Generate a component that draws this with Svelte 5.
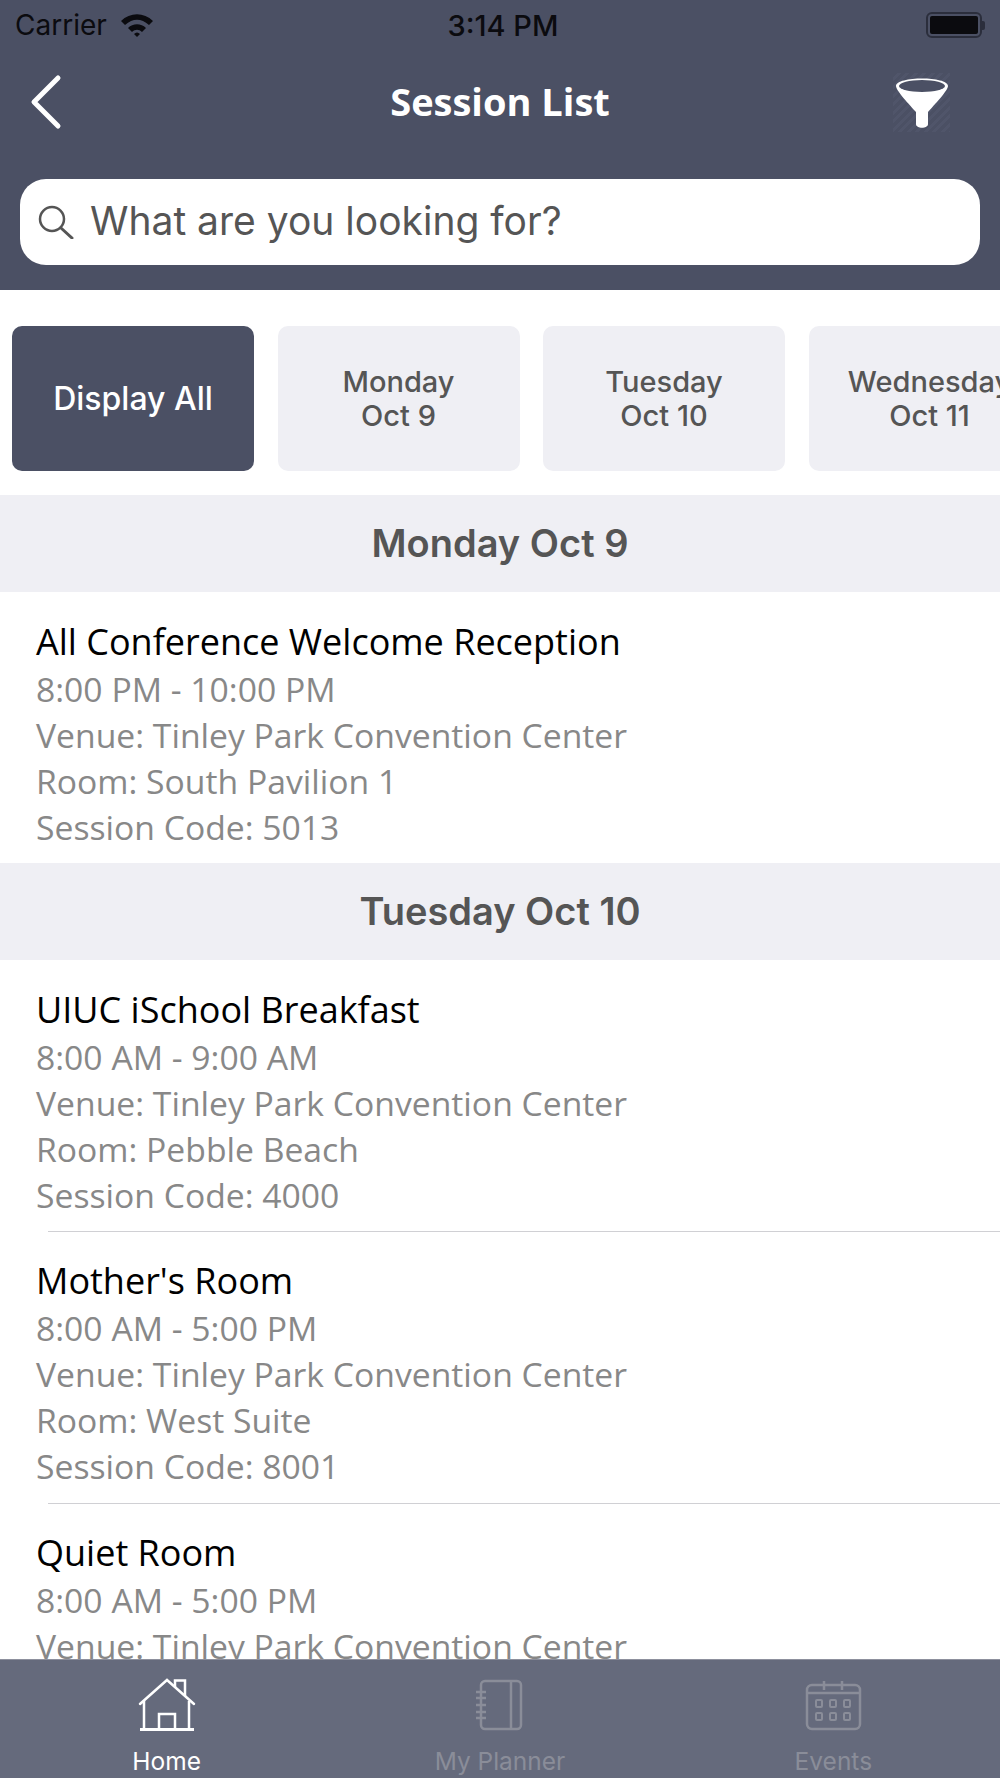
<script>
  const days = [
    { top: 'Monday', bottom: 'Oct 9' },
    { top: 'Tuesday', bottom: 'Oct 10' },
    { top: 'Wednesday', bottom: 'Oct 11' },
  ];

  const venue = 'Venue: Tinley Park Convention Center';

  const sections = [
    {
      title: 'Monday Oct 9',
      sessions: [
        { name: 'All Conference Welcome Reception', time: '8:00 PM - 10:00 PM', room: 'Room: South Pavilion 1', code: 'Session Code: 5013' },
      ],
    },
    {
      title: 'Tuesday Oct 10',
      sessions: [
        { name: 'UIUC iSchool Breakfast', time: '8:00 AM - 9:00 AM', room: 'Room: Pebble Beach', code: 'Session Code: 4000' },
        { name: "Mother's Room", time: '8:00 AM - 5:00 PM', room: 'Room: West Suite', code: 'Session Code: 8001' },
        { name: 'Quiet Room', time: '8:00 AM - 5:00 PM' },
      ],
    },
  ];

  const dots = [
    [16, 25], [30, 25], [44, 25],
    [16, 38], [30, 38], [44, 38],
  ];
</script>

<div class="screen">
  <header>
    <div class="status">
      <div class="carrier">
        <span>Carrier</span>
        <svg class="wifi" viewBox="0 0 34 24" width="34" height="24">
          <path d="M1 8 C10 -1 24 -1 33 8 L29 12 C21 5 13 5 5 12 Z" fill="#0b0b0f" />
          <path d="M8 15 C13 10 21 10 26 15 L22 19 C19 16 15 16 12 19 Z" fill="#0b0b0f" />
          <path d="M14 21 C16 19 18 19 20 21 L17 24 Z" fill="#0b0b0f" />
        </svg>
      </div>
      <span class="time">3:14 PM</span>
      <div class="battery"><span class="level"></span><span class="nub"></span></div>
    </div>

    <div class="nav">
      <svg class="back" viewBox="0 0 34 56" width="34" height="56">
        <path d="M29 4 L5 28 L29 52" fill="none" stroke="#fff" stroke-width="5" stroke-linecap="round" stroke-linejoin="round" />
      </svg>
      <h1>Session List</h1>
      <div class="filter">
        <svg viewBox="0 0 57 59" width="57" height="59">
          <path d="M3 13 C3 3 55 3 55 13 C55 17 45 28 35 39 L35 51 C35 56 23 56 23 51 L23 39 C13 28 3 17 3 13 Z" fill="#fff" />
          <ellipse cx="29" cy="13" rx="23" ry="6" fill="#4b5064" />
        </svg>
      </div>
    </div>

    <div class="search">
      <svg viewBox="0 0 36 34" width="36" height="34">
        <circle cx="14" cy="14" r="12" fill="none" stroke="#555" stroke-width="2.5" />
        <path d="M23 23 L34 33" stroke="#555" stroke-width="3" stroke-linecap="round" />
      </svg>
      <span>What are you looking for?</span>
    </div>
  </header>

  <div class="days">
    <button class="day active">Display All</button>
    {#each days as d}
      <button class="day">{d.top}<br />{d.bottom}</button>
    {/each}
  </div>

  <main>
    {#each sections as s}
      <h2>{s.title}</h2>
      {#each s.sessions as item, i}
        <article class:first={i === 0}>
          <h3>{item.name}</h3>
          <p>{item.time}</p>
          <p>{venue}</p>
          {#if item.room}
            <p>{item.room}</p>
            <p>{item.code}</p>
          {/if}
        </article>
      {/each}
    {/each}
  </main>

  <nav>
    <div class="tab current">
      <svg viewBox="0 0 60 56" width="60" height="56">
        <g fill="none" stroke="#fff" stroke-width="2.5">
          <path d="M3 26 L30 2 L57 26" stroke-linecap="round" />
          <path d="M38 9 L38 2.500 L48 2.500 L48 18" />
          <path d="M7 23 L7 51 M52 23 L52 51" />
          <path d="M22 51 L22 36 L38 36 L38 51" />
          <path d="M3 51.500 L57 51.500" stroke-width="3" />
        </g>
      </svg>
      <span>Home</span>
    </div>
    <div class="tab">
      <svg viewBox="0 0 60 56" width="60" height="56">
        <g fill="none" stroke="#8a8d99" stroke-width="2.500">
          <rect x="11" y="3" width="40" height="48" rx="4" />
          <path d="M41 3 L41 51" />
          <path d="M6 14 L16 14 M6 20 L16 20 M6 27 L16 27 M6 34 L16 34 M6 40 L16 40" />
        </g>
      </svg>
      <span>My Planner</span>
    </div>
    <div class="tab">
      <svg viewBox="0 0 60 56" width="60" height="56">
        <g fill="none" stroke="#8a8d99" stroke-width="2.500">
          <rect x="4" y="7" width="53" height="44" rx="5" />
          <path d="M4 15 L57 15 M21 3 L21 12 M39 3 L39 12" />
        </g>
        {#each dots as [x, y]}
          <rect x={x - 3} y={y - 3} width="6" height="7" rx="1" fill="none" stroke="#8a8d99" stroke-width="2" />
        {/each}
      </svg>
      <span>Events</span>
    </div>
  </nav>
</div>

<style>
  :global(body) {
    margin: 0;
    background: #fff;
  }

  .screen {
    width: 1000px;
    height: 1778px;
    display: flex;
    flex-direction: column;
    overflow: hidden;
    font-family: "Open Sans", "Noto Sans", sans-serif;
  }

  header {
    height: 290px;
    flex: none;
    box-sizing: border-box;
    background: #4b5064;
    padding: 0 20px;
  }

  .status {
    height: 50px;
    margin: 0 -5px;
    display: flex;
    align-items: center;
    justify-content: space-between;
    font-family: Inter, sans-serif;
    font-size: 28px;
    color: #0b0b0f;
  }

  .carrier {
    width: 200px;
    display: flex;
    align-items: center;
    gap: 13px;
  }

  .time {
    font-weight: 500;
    font-size: 29px;
    margin-left: 6px;
  }

  .battery {
    width: 200px;
    display: flex;
    align-items: center;
    justify-content: flex-end;
  }

  .level {
    box-sizing: border-box;
    width: 56px;
    height: 26px;
    border: 2px solid #2b2e3c;
    border-radius: 6px;
    padding: 2px;
    background: #0b0b0f content-box;
  }

  .nub {
    width: 3px;
    height: 9px;
    background: #2b2e3c;
    border-radius: 0 2px 2px 0;
  }

  .nav {
    height: 104px;
    display: grid;
    grid-template-columns: 1fr auto 1fr;
    align-items: center;
  }

  .back {
    margin-left: 9px;
  }

  h1 {
    margin: 0 0 2px;
    font-size: 38px;
    font-weight: 700;
    color: #fff;
  }

  .filter {
    justify-self: end;
    margin-right: 30px;
    height: 59px;
    background: repeating-linear-gradient(135deg, #4b5064 0 3px, #50556a 3px 6px);
  }

  .search {
    margin-top: 25px;
    height: 86px;
    background: #fff;
    border-radius: 26px;
    display: flex;
    align-items: center;
    gap: 16px;
    padding-left: 18px;
    font-family: Inter, sans-serif;
    font-size: 39px;
    color: #555;
  }

  .search span {
    margin-top: -3px;
  }

  .days {
    flex: none;
    display: flex;
    gap: 23.5px;
    padding: 36px 0 24px 12px;
    overflow: hidden;
  }

  .day {
    flex: none;
    width: 242px;
    height: 145px;
    border: none;
    border-radius: 10px;
    background: #efeff4;
    color: #555;
    font-family: Inter, sans-serif;
    font-size: 29px;
    font-weight: 500;
    line-height: 34px;
    padding: 0;
    white-space: nowrap;
  }

  .active {
    background: #4b5064;
    color: #fff;
    font-size: 32px;
  }

  main {
    flex: 1;
    overflow: hidden;
  }

  h2 {
    margin: 0;
    height: 97px;
    line-height: 97px;
    background: #efeff4;
    text-align: center;
    font-family: Inter, sans-serif;
    font-size: 38px;
    font-weight: 600;
    color: #555;
  }

  article {
    margin-left: 48px;
    padding: 25px 0 14px;
    border-top: 1px solid #d0d0d4;
  }

  article.first {
    border-top: none;
    padding-top: 26px;
    padding-bottom: 13px;
  }

  h3 {
    margin: 0 0 0 -12px;
    font-size: 36px;
    font-weight: 400;
    line-height: 48px;
    color: #000;
  }

  p {
    margin: 0 0 0 -12px;
    font-size: 33.7px;
    line-height: 46px;
    color: #888;
  }

  nav {
    flex: none;
    height: 119px;
    box-sizing: border-box;
    border-top: 1px solid #8d909d;
    background: #656a7c;
    display: grid;
    grid-template-columns: repeat(3, 1fr);
  }

  .tab {
    display: flex;
    flex-direction: column;
    align-items: center;
    padding-top: 18px;
    font-family: Inter, sans-serif;
    font-size: 24.5px;
    color: #8a8d99;
  }

  .tab svg {
    display: block;
    margin-bottom: 12px;
  }

  .current {
    color: #fff;
  }
</style>
